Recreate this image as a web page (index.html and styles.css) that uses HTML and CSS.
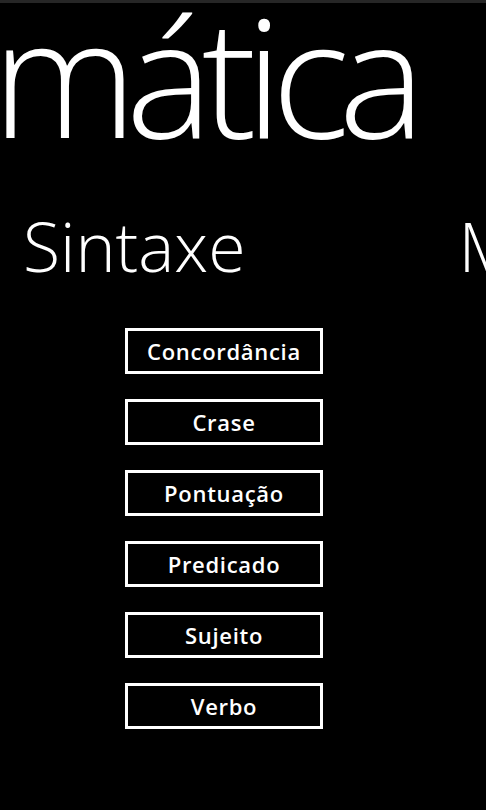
FILE: index.html
```html
<!DOCTYPE html>
<html lang="pt">
<head>
<meta charset="utf-8">
<link rel="stylesheet" href="styles.css">
</head>
<body>
<div class="topbar"></div>
<div class="panorama">
  <h1 class="title">mática</h1>
  <div class="headers">
    <h2 class="section">Sintaxe</h2>
    <h2 class="section next">M</h2>
  </div>
  <div class="buttons">
    <button class="btn">Concordância</button>
    <button class="btn">Crase</button>
    <button class="btn">Pontuação</button>
    <button class="btn">Predicado</button>
    <button class="btn">Sujeito</button>
    <button class="btn">Verbo</button>
  </div>
</div>
</body>
</html>
```
FILE: styles.css
```css
html, body {
  margin: 0;
  padding: 0;
  background: #000;
  width: 486px;
  height: 810px;
  overflow: hidden;
}
body {
  color: #fff;
  font-family: "Open Sans", "Noto Sans", sans-serif;
}
.topbar {
  height: 3px;
  background: #262626;
}
.panorama {
  display: flex;
  flex-direction: column;
}
.title {
  margin: -3px 0 0 -8px;
  font-weight: 300;
  font-size: 164px;
  line-height: 150px;
  white-space: nowrap;
  letter-spacing: -11px;
  padding-top: 0;
}
.headers {
  display: flex;
  margin-top: 56px;
  padding-left: 23px;
  gap: 213px;
  white-space: nowrap;
}
.section {
  margin: 0;
  font-weight: 300;
  font-size: 68px;
  line-height: 80px;
}
.buttons {
  margin-top: 42px;
  display: flex;
  flex-direction: column;
  align-items: flex-start;
  padding-left: 125px;
  gap: 25px;
}
.btn {
  width: 198px;
  height: 46px;
  background: #000;
  color: #fff;
  border: 3px solid #fff;
  font-family: "Open Sans", "Noto Sans", sans-serif;
  font-weight: 600;
  font-size: 22px;
  letter-spacing: 0.7px;
  padding: 0;
  margin: 0;
}
```
